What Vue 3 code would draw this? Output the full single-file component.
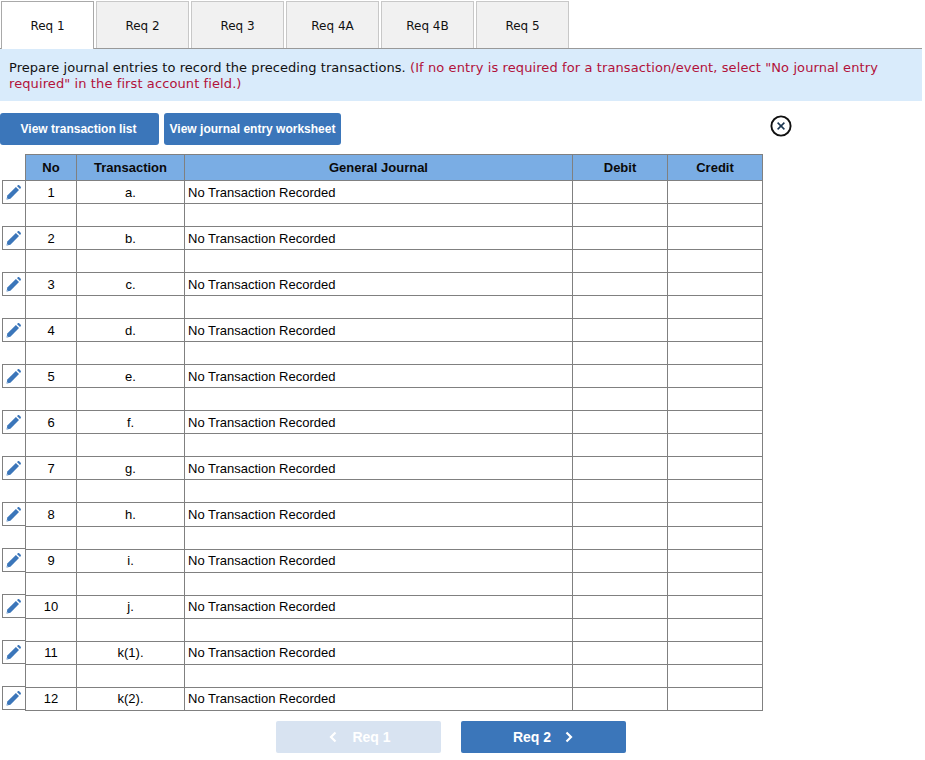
<script setup>
const tabs = ['Req 1', 'Req 2', 'Req 3', 'Req 4A', 'Req 4B', 'Req 5']
const labels = ['a.', 'b.', 'c.', 'd.', 'e.', 'f.', 'g.', 'h.', 'i.', 'j.', 'k(1).', 'k(2).']
const entries = labels.map((t, i) => ({ no: i + 1, t }))
</script>

<template>
  <div class="page">
    <div class="tabs">
      <div v-for="(t, i) in tabs" :key="t" class="tab" :class="{ active: i === 0 }">{{ t }}</div>
    </div>
    <div class="band">
      Prepare journal entries to record the preceding transactions.
      <span class="note">(If no entry is required for a transaction/event, select "No journal entry required" in the first account field.)</span>
    </div>
    <div class="toolbar">
      <button class="btn first">View transaction list</button>
      <button class="btn second">View journal entry worksheet</button>
      <svg class="close" width="22" height="22" viewBox="0 0 22 22">
        <circle cx="11" cy="11" r="9.6" fill="none" stroke="#111" stroke-width="1.9" />
        <path d="M7.6 7.6 14.4 14.4M14.4 7.6 7.6 14.4" fill="none" stroke="#1a3550" stroke-width="1.5" />
      </svg>
    </div>
    <div class="sheet">
      <div class="edits">
        <div v-for="e in entries" :key="e.no" class="edit">
          <svg width="15" height="15" viewBox="0 0 15 15">
            <path d="M0.6 14.4 1.3 10.6 9.9 2 13 5.1 4.4 13.7Z" fill="#3b76ba" />
            <path d="M10.9 1 12 0.2C12.4 -0.1 12.9 0 13.2 0.3L14.7 1.8C15 2.1 15 2.6 14.8 3L14 4.1Z" fill="#3b76ba" />
            <path d="M0.6 14.4 0.9 12.6 2.4 14.1Z" fill="#9db9da" />
          </svg>
        </div>
      </div>
      <table class="journal">
        <colgroup>
          <col class="c1" /><col class="c2" /><col class="c3" /><col class="c4" /><col class="c5" />
        </colgroup>
        <thead>
          <tr>
            <th>No</th>
            <th>Transaction</th>
            <th>General Journal</th>
            <th>Debit</th>
            <th class="end">Credit</th>
          </tr>
        </thead>
        <tbody>
          <template v-for="(e, i) in entries" :key="e.no">
            <tr :class="{ tall: e.no === 8, raised: e.no > 8, last: i === entries.length - 1 }">
              <td class="mid">{{ e.no }}</td>
              <td class="mid">{{ e.t }}</td>
              <td class="text">No Transaction Recorded</td>
              <td></td>
              <td class="end"></td>
            </tr>
            <tr v-if="i < entries.length - 1">
              <td></td>
              <td></td>
              <td></td>
              <td></td>
              <td class="end"></td>
            </tr>
          </template>
        </tbody>
      </table>
    </div>
    <div class="pager">
      <button class="nav off">
        <svg class="prev" width="10" height="12" viewBox="0 0 10 12"><path d="M7.5 1.5 3 6 7.5 10.5" fill="none" stroke="#fff" stroke-width="2.2" /></svg>
        <span>Req 1</span>
      </button>
      <button class="nav">
        <span>Req 2</span>
        <svg class="next" width="10" height="12" viewBox="0 0 10 12"><path d="M2.5 1.5 7 6 2.5 10.5" fill="none" stroke="#fff" stroke-width="2.2" /></svg>
      </button>
    </div>
  </div>
</template>

<style scoped>
.page {
  width: 925px;
  height: 760px;
  overflow: hidden;
  background: #fff;
  font-family: "Liberation Sans", Arial, sans-serif;
  color: #000;
}
.tabs {
  display: flex;
  gap: 2px;
  height: 48px;
  padding: 1px 0 0 1px;
  box-sizing: border-box;
}
.tab {
  width: 93px;
  height: 47px;
  box-sizing: border-box;
  border: 1px solid #c8c8c8;
  border-bottom: none;
  background: #f1f1f1;
  font: 12px/49px "DejaVu Sans", Verdana, sans-serif;
  text-align: center;
  color: #111;
}
.tab.active {
  background: #fff;
  border-color: #a9a9a9;
  height: 48px;
  position: relative;
  z-index: 1;
}
.band {
  width: 922px;
  height: 53px;
  box-sizing: border-box;
  border-top: 1px solid #999;
  background: #d9ebfb;
  padding: 11px 9px 0;
  font: 13px/16px "DejaVu Sans", Verdana, sans-serif;
  letter-spacing: 0.05px;
  color: #111;
}
.note {
  color: #b2123a;
  letter-spacing: 0.1px;
}
.toolbar {
  display: flex;
  align-items: flex-start;
  margin-top: 12px;
  height: 41px;
}
.btn {
  height: 32px;
  border: none;
  border-radius: 3px;
  background: #3b76ba;
  color: #fff;
  font: bold 12px "Liberation Sans", Arial, sans-serif;
  padding: 0;
}
.btn.first {
  width: 159px;
  padding-right: 2px;
}
.btn.second {
  width: 177px;
  margin-left: 5px;
}
.close {
  margin: 2px 0 0 429px;
}
.sheet {
  display: flex;
  align-items: flex-start;
}
.edits {
  display: flex;
  flex-direction: column;
  gap: 22px;
  width: 23px;
  margin-left: 2px;
  padding-top: 26px;
}
.edit {
  height: 24px;
  box-sizing: border-box;
  border: 1px solid #808080;
  border-right: none;
  display: flex;
  align-items: center;
  justify-content: center;
  padding-right: 1px;
}
.journal {
  table-layout: fixed;
  border-collapse: separate;
  border-spacing: 0;
  width: 738px;
  font-size: 13px;
}
.c1 { width: 51px; }
.c2 { width: 108px; }
.c3 { width: 388px; }
.c4 { width: 95px; }
.c5 { width: 96px; }
th {
  height: 26px;
  box-sizing: border-box;
  padding: 0 0 1px;
  background: #7aade4;
  border-top: 1px solid #808080;
  border-left: 1px solid #808080;
  font-weight: bold;
  font-size: 13px;
  color: #0a0a0a;
}
td {
  height: 23px;
  box-sizing: border-box;
  padding: 0;
  border-top: 1px solid #808080;
  border-left: 1px solid #808080;
}
.tall td {
  height: 24px;
}
.raised td {
  padding-bottom: 2px;
}
td.end, th.end {
  border-right: 1px solid #808080;
}
.mid {
  text-align: center;
}
td.text {
  padding-left: 3px;
}
.last td {
  border-bottom: 1px solid #808080;
  height: 24px;
}
.pager {
  display: flex;
  gap: 20px;
  margin: 10px 0 0 276px;
}
.nav {
  width: 165px;
  height: 32px;
  border: none;
  border-radius: 2px;
  background: #3b76ba;
  color: #fff;
  font: bold 14px "Liberation Sans", Arial, sans-serif;
  display: flex;
  align-items: center;
  justify-content: center;
  gap: 14px;
  padding: 0;
}
.nav.off {
  background: #d8e3f1;
  padding-left: 2px;
  gap: 15px;
}
.next {
  margin-left: -1px;
}
.prev {
  margin-right: -1px;
}
</style>
